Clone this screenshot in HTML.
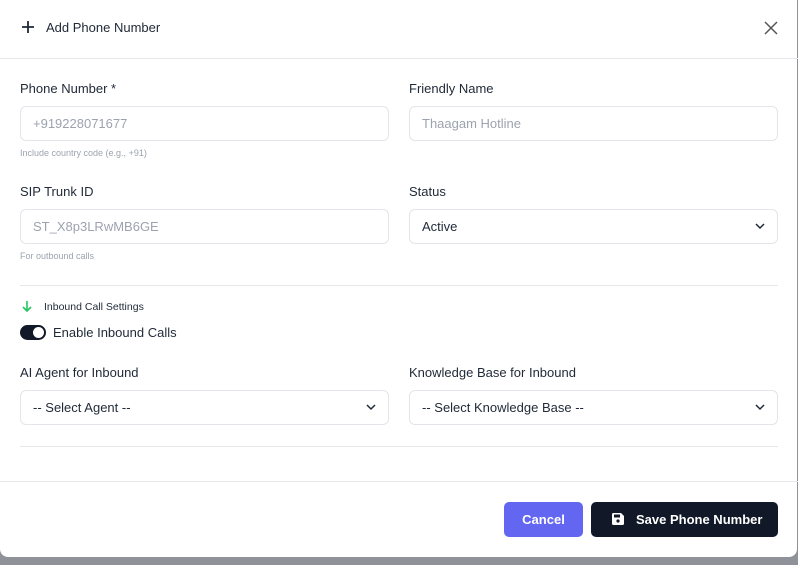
<!DOCTYPE html><html><head><style>
*{box-sizing:border-box;margin:0;padding:0}
body{width:798px;height:565px;background:#8f9399;font-family:"Liberation Sans",sans-serif;position:relative;overflow:hidden}
.m{position:absolute;left:0;top:0;width:797px;height:557px;background:#fff;border-radius:0 0 8px 8px}
.a{position:absolute}
.lbl{font-size:13px;color:#1f2937}
.in{position:absolute;height:35px;border:1px solid #e2e5ea;border-radius:6px;font-size:13px;color:#9ca3af;padding:0 12px;line-height:33px;width:369px}
.sel{color:#1f2937}
.hint{font-size:9px;color:#9ca3af}
.hr{position:absolute;left:20px;width:758px;height:1px;background:#e5e7eb}
.chev{position:absolute;right:12px;top:12px}
</style></head><body><div class="m">
<svg class="a" style="left:22px;top:21px" width="12" height="12" viewBox="0 0 12 12"><path d="M6 0v12M0 6h12" stroke="#1f2937" stroke-width="1.8"/></svg>
<div class="a" style="left:46px;top:20px;font-size:13px;color:#1f2937">Add Phone Number</div>
<svg class="a" style="left:764px;top:21px" width="14" height="14" viewBox="0 0 14 14"><path d="M1 1l12 12M13 1L1 13" stroke="#555" stroke-width="1.5"/></svg>
<div class="a" style="left:0;top:58px;width:798px;height:1px;background:#e5e7eb"></div>
<div class="a lbl" style="left:20px;top:81px">Phone Number *</div>
<div class="a lbl" style="left:409px;top:81px">Friendly Name</div>
<div class="in" style="left:20px;top:106px">+919228071677</div>
<div class="in" style="left:409px;top:106px">Thaagam Hotline</div>
<div class="a hint" style="left:20px;top:148px">Include country code (e.g., +91)</div>
<div class="a lbl" style="left:20px;top:184px">SIP Trunk ID</div>
<div class="a lbl" style="left:409px;top:184px">Status</div>
<div class="in" style="left:20px;top:209px">ST_X8p3LRwMB6GE</div>
<div class="in sel" style="left:409px;top:209px">Active<svg class="chev" width="10" height="8" viewBox="0 0 10 8"><path d="M1 2l4 4 4-4" stroke="#1f2937" stroke-width="1.5" fill="none"/></svg></div>
<div class="a hint" style="left:20px;top:251px">For outbound calls</div>
<div class="hr" style="top:285px"></div>
<svg class="a" style="left:22px;top:301px" width="10" height="12" viewBox="0 0 10 12"><path d="M5 0v10M1 6l4 4 4-4" stroke="#22c55e" stroke-width="1.6" fill="none"/></svg>
<div class="a" style="left:44px;top:301px;font-size:10.5px;color:#1f2937">Inbound Call Settings</div>
<div class="a" style="left:20px;top:325px;width:26px;height:15px;border-radius:8px;background:#111827"><div class="a" style="right:2px;top:2px;width:11px;height:11px;border-radius:50%;background:#fff"></div></div>
<div class="a lbl" style="left:53px;top:325px">Enable Inbound Calls</div>
<div class="a lbl" style="left:20px;top:365px">AI Agent for Inbound</div>
<div class="a lbl" style="left:409px;top:365px">Knowledge Base for Inbound</div>
<div class="in sel" style="left:20px;top:390px">-- Select Agent --<svg class="chev" width="10" height="8" viewBox="0 0 10 8"><path d="M1 2l4 4 4-4" stroke="#1f2937" stroke-width="1.5" fill="none"/></svg></div>
<div class="in sel" style="left:409px;top:390px">-- Select Knowledge Base --<svg class="chev" width="10" height="8" viewBox="0 0 10 8"><path d="M1 2l4 4 4-4" stroke="#1f2937" stroke-width="1.5" fill="none"/></svg></div>
<div class="hr" style="top:446px"></div>
<div class="a" style="left:0;top:481px;width:798px;height:1px;background:#e5e7eb"></div>
<div class="a" style="left:504px;top:502px;width:79px;height:35px;border-radius:5px;background:#6366f1;color:#fff;font-size:13px;font-weight:bold;text-align:center;line-height:35px">Cancel</div>
<div class="a" style="left:591px;top:502px;width:187px;height:35px;border-radius:5px;background:#111827;color:#fff;font-size:13px;font-weight:bold;line-height:35px;padding-left:45px">Save Phone Number</div>
<svg class="a" style="left:612px;top:513px" width="12" height="12" viewBox="0 0 12 12"><path d="M0 1.5Q0 0 1.5 0H9l3 3v7.5Q12 12 10.5 12h-9Q0 12 0 10.5z" fill="#fff"/><rect x="2" y="1.5" width="6" height="3" fill="#111827"/><circle cx="6" cy="8" r="1.6" fill="#111827"/></svg>
</div></body></html>
